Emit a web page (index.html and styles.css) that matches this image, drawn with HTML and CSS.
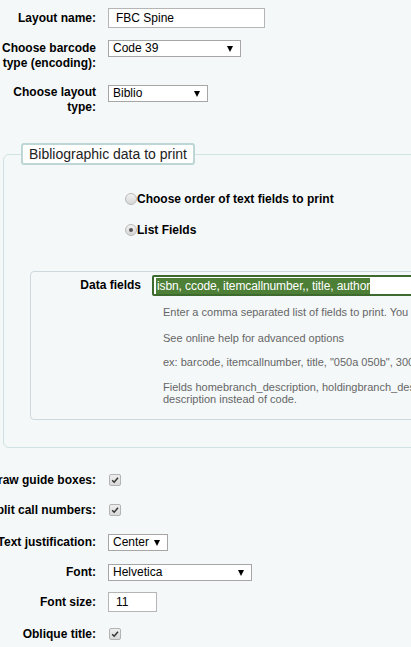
FILE: index.html
```html
<!DOCTYPE html>
<html>
<head>
<meta charset="utf-8">
<link rel="stylesheet" href="styles.css">
</head>
<body>
<div class="page">
  <div class="top">
    <div class="row r1">
      <div class="lbl pt3">Layout name:</div>
      <div class="textbox w157">FBC Spine</div>
    </div>
    <div class="row r2">
      <div class="lbl wrap">Choose barcode type (encoding):</div>
      <div class="select w132"><span>Code 39</span><i class="arrow"></i></div>
    </div>
    <div class="row r3">
      <div class="lbl wrap">Choose layout type:</div>
      <div class="select w99"><span>Biblio</span><i class="arrow"></i></div>
    </div>
  </div>

  <fieldset class="biblio">
    <legend>Bibliographic data to print</legend>
    <div class="radios">
      <div class="radio-row first"><span class="radio"></span><b>Choose order of text fields to print</b></div>
      <div class="radio-row second"><span class="radio on"></span> <b>List Fields</b></div>
    </div>
    <fieldset class="inner">
      <div class="df-row">
        <div class="df-lbl">Data fields</div>
        <div class="df-col">
          <div class="df-input"><span class="sel">isbn, ccode, itemcallnumber,, title, author</span></div>
          <div class="help">
            <p>Enter a comma separated list of fields to print. You may include any <em>Koha field</em> or MARC subfield.</p>
            <p>See online help for advanced options</p>
            <p>ex: barcode, itemcallnumber, title, "050a 050b", 300a</p>
            <p class="narrow">Fields homebranch_description, holdingbranch_descr will print the description instead of code.</p>
          </div>
        </div>
      </div>
    </fieldset>
  </fieldset>

  <div class="bottom">
    <div class="row b">
      <div class="lbl">Draw guide boxes:</div>
      <span class="check"><svg viewBox="0 0 12 12" width="12" height="12"><path d="M2.6 6.2 L5 8.6 L9.6 3.4" fill="none" stroke="#333" stroke-width="1.8"/></svg></span>
    </div>
    <div class="row b">
      <div class="lbl">Split call numbers:</div>
      <span class="check"><svg viewBox="0 0 12 12" width="12" height="12"><path d="M2.6 6.2 L5 8.6 L9.6 3.4" fill="none" stroke="#333" stroke-width="1.8"/></svg></span>
    </div>
    <div class="row b sp">
      <div class="lbl">Text justification:</div>
      <div class="select w59"><span>Center</span><i class="arrow"></i></div>
    </div>
    <div class="row b">
      <div class="lbl">Font:</div>
      <div class="select w143"><span>Helvetica</span><i class="arrow"></i></div>
    </div>
    <div class="row b">
      <div class="lbl">Font size:</div>
      <div class="textbox w48">11</div>
    </div>
    <div class="row b sp">
      <div class="lbl">Oblique title:</div>
      <span class="check"><svg viewBox="0 0 12 12" width="12" height="12"><path d="M2.6 6.2 L5 8.6 L9.6 3.4" fill="none" stroke="#333" stroke-width="1.8"/></svg></span>
    </div>
  </div>
</div>
</body>
</html>
```

FILE: styles.css
```css
html, body {
  margin: 0;
  padding: 0;
  background: #f4f8f9;
  overflow: hidden;
}
body {
  width: 411px;
  height: 647px;
  font-family: Arial, "Liberation Sans", sans-serif;
  font-size: 12px;
  color: #000;
}
.page {
  position: relative;
  width: 411px;
  overflow: hidden;
}
.top {
  padding-top: 8px;
}
.row {
  display: flex;
  align-items: flex-start;
  gap: 12px;
}
.r2 { margin-top: 12px; }
.r2 .lbl { padding-top: 1px; }
.r3 { margin-top: 14px; }
.lbl {
  width: 96px;
  flex: none;
  display: flex;
  justify-content: flex-end;
  text-align: right;
  font-weight: bold;
  line-height: 15px;
  white-space: nowrap;
}
.lbl.wrap {
  display: block;
  white-space: normal;
}
.pt3 { padding-top: 3px; }

.textbox {
  box-sizing: border-box;
  height: 20px;
  background: #fff;
  border: 1px solid #b5b5b5;
  padding: 0 0 0 7px;
  line-height: 19px;
  font-size: 12px;
}
.w157 { width: 157px; }
.w48 { width: 49px; }

.select {
  box-sizing: border-box;
  height: 17px;
  background: #fff;
  border: 1px solid #a6a6a6;
  display: flex;
  align-items: center;
  justify-content: space-between;
  padding: 0 7px 0 4px;
  font-size: 12px;
  line-height: 15px;
}
.select .arrow {
  width: 0;
  height: 0;
  border-left: 3.5px solid transparent;
  border-right: 3.5px solid transparent;
  border-top: 6px solid #000;
  margin-top: 1px;
}
.w132 { width: 133px; }
.w99 { width: 100px; }
.w59 { width: 60px; }
.w143 { width: 144px; }

fieldset.biblio {
  margin: 28px 0 0 3px;
  padding: 0 0 27px 26px;
  width: 520px;
  border: 1px solid #cfe1e2;
  border-radius: 6px;
  min-width: 0;
}
fieldset.biblio legend {
  margin-left: -9px;
  padding: 0 6px;
  height: 22px;
  box-sizing: border-box;
  line-height: 18px;
  font-size: 14px;
  color: #222;
  background: #fff;
  border: 2px solid #bcd7d6;
  border-radius: 3px;
}
.radios {
  padding-left: 95px;
  padding-top: 26px;
}
.radio-row {
  display: flex;
  align-items: center;
  height: 15px;
  font-size: 12px;
  white-space: pre;
}
.radio-row.second { margin-top: 16px; }
.radio {
  box-sizing: border-box;
  width: 12px;
  height: 12px;
  border-radius: 50%;
  border: 1px solid #b9b9b9;
  background: linear-gradient(#f2f2f2, #d6d6d6);
  display: inline-flex;
  align-items: center;
  justify-content: center;
  flex: none;
}
.radio.on::after {
  content: "";
  width: 4px;
  height: 4px;
  border-radius: 50%;
  background: #555;
}

fieldset.inner {
  margin: 34px 0 0 0;
  padding: 3px 0 14px 0;
  border: 1px solid #cdd9dc;
  border-radius: 4px;
  width: 480px;
  min-width: 0;
}
.df-row {
  display: flex;
  gap: 11px;
}
.df-lbl {
  width: 110px;
  text-align: right;
  font-weight: bold;
  line-height: 21px;
  flex: none;
}
.df-col {
  flex: 1;
}
.df-input {
  box-sizing: border-box;
  height: 21px;
  width: 330px;
  background: #fff;
  border: 2px solid #3d6b2f;
  border-radius: 2px;
  padding: 1px 0 0 2px;
  line-height: 15px;
  white-space: nowrap;
}
.df-input .sel {
  background: #4d7f37;
  color: #fff;
  font-size: 12px;
  display: inline-block;
  line-height: 16px;
  padding-left: 1px;
  letter-spacing: -0.1px;
}
.help {
  padding-left: 11px;
  color: #666;
  font-size: 11px;
  line-height: 12px;
}
.help p {
  margin: 0;
  white-space: nowrap;
}
.help p:nth-child(1) { margin-top: 10px; }
.help p:nth-child(2) { margin-top: 14px; }
.help p:nth-child(3) { margin-top: 12px; }
.help p:nth-child(4) { margin-top: 13px; }
.help p.narrow {
  white-space: normal;
  width: 330px;
}

.bottom {
  padding-top: 17px;
}
.row.b {
  height: 30px;
  align-items: center;
}
.row.b.sp { margin-top: 2px; }
.check {
  box-sizing: border-box;
  width: 12px;
  height: 12px;
  border: 1px solid #b3b3b3;
  border-radius: 2px;
  background: linear-gradient(#eeeeee, #d9d9d9);
  display: inline-flex;
  align-items: center;
  justify-content: center;
  margin-left: 1px;
}
.check svg {
  width: 10px;
  height: 10px;
}
```
